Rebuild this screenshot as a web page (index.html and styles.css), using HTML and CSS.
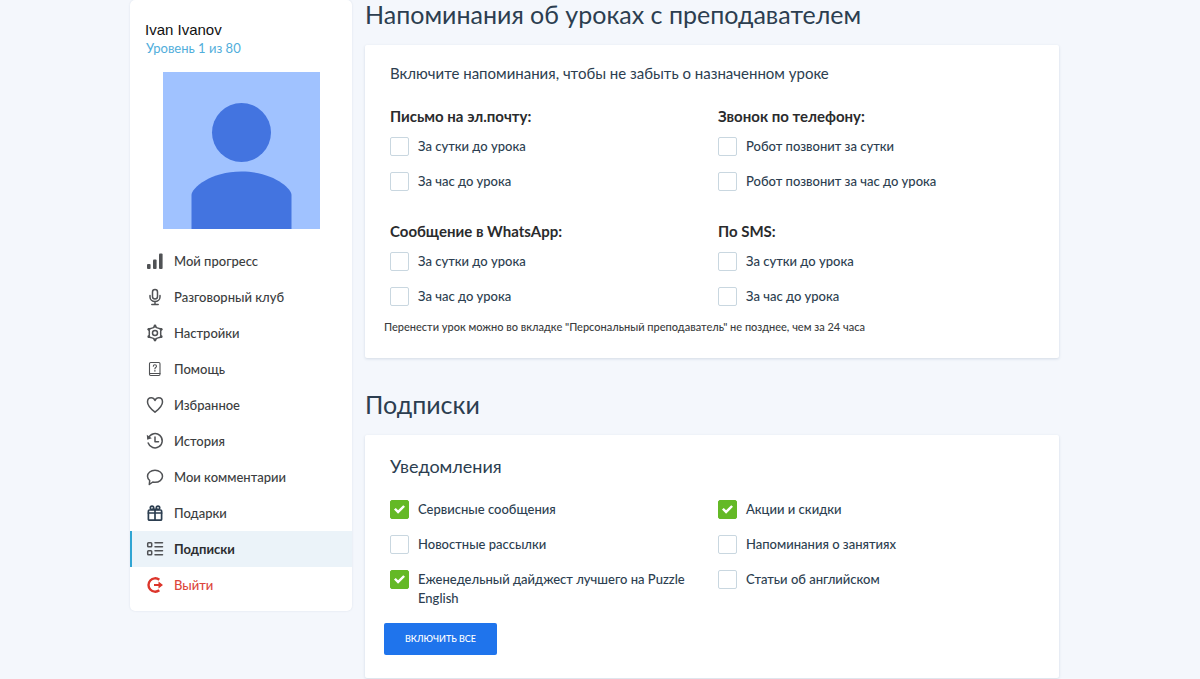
FILE: index.html
```html
<!DOCTYPE html>
<html lang="ru">
<head>
<meta charset="utf-8">
<meta name="viewport" content="width=device-width, initial-scale=1">
<title>Подписки</title>
<link rel="stylesheet" href="styles.css">
</head>
<body>
<div class="page">
  <aside class="sidebar">
    <div class="profile">
      <div class="profile-name">Ivan Ivanov</div>
      <a class="profile-level" href="#">Уровень 1 из 80</a>
      <svg class="avatar" viewBox="0 0 157 157" role="img" aria-label="Ivan Ivanov">
        <rect width="157" height="157" fill="#a0c2ff"/>
        <circle cx="78.500" cy="60.500" r="29.500" fill="#4374e0"/>
        <path d="M28.500 157v-34c0-7 19-23.500 50-23.500s50 16.500 50 23.500v34z" fill="#4374e0"/>
      </svg>
    </div>
    <nav class="menu">
      <a class="menu-item" href="#"><svg class="icon" viewBox="0 0 18 18"><g fill="#505255"><rect x="1" y="12" width="3.600" height="5" rx="1"/><rect x="7" y="7.500" width="3.600" height="9.500" rx="1"/><rect x="13" y="1.500" width="3.600" height="15.500" rx="1"/></g></svg>Мой прогресс</a>
      <a class="menu-item" href="#"><svg class="icon" viewBox="0 0 18 18"><g class="stroke"><rect x="6.500" y="1.500" width="5" height="9.500" rx="2.500"/><path d="M4 7.500v1.500a5 4.500 0 0 0 10 0V7.500M9 13.500v3M5.800 16.500h6.400"/></g></svg>Разговорный клуб</a>
      <a class="menu-item" href="#"><svg class="icon" viewBox="0 0 18 18"><g class="stroke"><path d="M9 2l1.600 1.600 3 1 1.700.3-.6 2.200v3.800l.6 2.200-1.700.3-3 1L9 16l-1.600-1.600-3-1-1.700-.3.600-2.200V7.100l-.6-2.200 1.700-.3 3-1z"/><circle cx="9" cy="9" r="2.500"/></g><g fill="#505255"><circle cx="9" cy="2" r="1.400"/><circle cx="15.200" cy="5.300" r="1.400"/><circle cx="15.200" cy="12.700" r="1.400"/><circle cx="9" cy="16" r="1.400"/><circle cx="2.800" cy="12.700" r="1.400"/><circle cx="2.800" cy="5.300" r="1.400"/></g></svg>Настройки</a>
      <a class="menu-item" href="#"><svg class="icon" viewBox="0 0 18 18"><g class="stroke thin"><rect x="3.500" y="2.500" width="10.500" height="13" rx="1.200"/><path d="M4 13.500h10M7.300 6.200c0-2 3.200-2 3.200 0 0 1.300-1.600 1.200-1.600 2.600M8.900 10.300v1"/></g></svg>Помощь</a>
      <a class="menu-item" href="#"><svg class="icon" viewBox="0 0 18 18"><path class="stroke" d="M9 16.200C5.500 13.500 1.500 10 1.500 6c0-2.500 1.600-4.200 3.800-4.200C7 1.800 8.300 2.900 9 4.500c.7-1.600 2-2.700 3.700-2.700 2.200 0 3.800 1.700 3.800 4.200 0 4-4 7.500-7.500 10.200z"/></svg>Избранное</a>
      <a class="menu-item" href="#"><svg class="icon" viewBox="0 0 18 18"><g class="stroke"><path d="M2.600 5.500A7.200 7.200 0 1 1 2.200 11M9 5v4.700h3.500"/></g><path d="M.8 2.800l.4 5 4.600-1.600z" fill="#505255"/></svg>История</a>
      <a class="menu-item" href="#"><svg class="icon" viewBox="0 0 18 18"><path class="stroke" d="M3.300 16.500l.4-4C2.300 11.300 1.500 10 1.500 8.300c0-3.500 3.300-6 7.500-6s7.500 2.500 7.500 6-3.300 6-7.500 6c-.8 0-1.500-.1-2.200-.3z"/></svg>Мои комментарии</a>
      <a class="menu-item" href="#"><svg class="icon" viewBox="0 0 18 18"><g class="stroke gift"><rect x="2.400" y="6" width="13.200" height="10.200" rx="1"/><path d="M2.400 9h13.200M9 6v10"/><circle cx="6" cy="3.800" r="1.700"/><circle cx="12" cy="3.800" r="1.700"/><path d="M7.500 4.500L9 6l1.500-1.500"/></g></svg>Подарки</a>
      <a class="menu-item active" href="#" aria-current="page"><svg class="icon" viewBox="0 0 18 18"><g class="stroke"><rect x="1.700" y="2.700" width="4" height="4" rx=".8"/><rect x="1.700" y="10.700" width="4" height="4" rx=".8"/><path d="M9 2.700h7.500M9 6.700h7.500M9 10.700h7.500M9 14.700h7.500"/></g></svg>Подписки</a>
      <a class="menu-item exit" href="#"><svg class="icon" viewBox="0 0 18 18"><path d="M13.300 3.700A6.700 6.700 0 1 0 13.300 14.300" fill="none" stroke="#dc352b" stroke-width="2.400"/><path d="M8 8.100h4.500V5.600L17 9l-4.500 3.400V9.900H8z" fill="#dc352b"/></svg>Выйти</a>
    </nav>
  </aside>

  <main class="content">
    <h1 class="section-title">Напоминания об уроках с преподавателем</h1>
    <section class="card">
      <p class="lead">Включите напоминания, чтобы не забыть о назначенном уроке</p>
      <div class="groups">
        <fieldset class="group">
          <legend>Письмо на эл.почту:</legend>
          <label class="option"><input type="checkbox">За сутки до урока</label>
          <label class="option"><input type="checkbox">За час до урока</label>
        </fieldset>
        <fieldset class="group">
          <legend>Звонок по телефону:</legend>
          <label class="option"><input type="checkbox">Робот позвонит за сутки</label>
          <label class="option"><input type="checkbox">Робот позвонит за час до урока</label>
        </fieldset>
        <fieldset class="group">
          <legend>Сообщение в WhatsApp:</legend>
          <label class="option"><input type="checkbox">За сутки до урока</label>
          <label class="option"><input type="checkbox">За час до урока</label>
        </fieldset>
        <fieldset class="group">
          <legend>По SMS:</legend>
          <label class="option"><input type="checkbox">За сутки до урока</label>
          <label class="option"><input type="checkbox">За час до урока</label>
        </fieldset>
      </div>
      <p class="note">Перенести урок можно во вкладке "Персональный преподаватель" не позднее, чем за 24 часа</p>
    </section>

    <h2 class="section-title">Подписки</h2>
    <section class="card">
      <h3 class="card-title">Уведомления</h3>
      <div class="subscriptions">
        <label class="option"><input type="checkbox" checked>Сервисные сообщения</label>
        <label class="option"><input type="checkbox" checked>Акции и скидки</label>
        <label class="option"><input type="checkbox">Новостные рассылки</label>
        <label class="option"><input type="checkbox">Напоминания о занятиях</label>
        <label class="option"><input type="checkbox" checked>Еженедельный дайджест лучшего на Puzzle English</label>
        <label class="option"><input type="checkbox">Статьи об английском</label>
      </div>
      <button class="enable-all" type="button">ВКЛЮЧИТЬ ВСЕ</button>
    </section>
  </main>
</div>
</body>
</html>
```
FILE: styles.css
```css
* { box-sizing: border-box; }

body {
  margin: 0;
  background: #f4f7fc;
  color: #2c3e50;
  font-family: Lato, "Noto Sans", sans-serif;
  font-size: 13px;
  font-weight: 500;
  line-height: 19px;
}

h1, h2, h3, p { margin: 0; font-weight: 400; }
a { text-decoration: none; }

.page {
  display: grid;
  grid-template-columns: 222px minmax(0, 1fr);
  gap: 13px;
  align-items: start;
  padding: 0 141px 0 130px;
}

.sidebar {
  padding: 20px 0 8px;
  background: #fff;
  border-radius: 5px;
  box-shadow: 0 0 2px rgba(60, 90, 130, .15);
}

.profile { padding: 0 15px; }

.profile-name {
  color: #111;
  font-family: "Liberation Sans", Arial, sans-serif;
  font-size: 15px;
  font-weight: 400;
  line-height: 20px;
}

.profile-level {
  display: block;
  padding-left: 1px;
  color: #51aedb;
  font-size: 13px;
  font-weight: 400;
  line-height: 17px;
}

.avatar {
  display: block;
  width: 157px;
  height: 157px;
  margin: 15px 0 14px 18px;
}

.menu-item {
  display: flex;
  align-items: center;
  gap: 10px;
  height: 36px;
  padding: 0 16px;
  color: #3b3d40;
}

.menu-item.active {
  padding-left: 14px;
  border-left: 2px solid #30a5d3;
  background: #ebf3f9;
  color: #2b2d30;
  font-weight: 700;
}

.menu-item.exit { color: #dc453b; }

.icon { flex: none; width: 18px; height: 18px; }

.stroke {
  fill: none;
  stroke: #505255;
  stroke-width: 1.5;
  stroke-linecap: round;
  stroke-linejoin: round;
}
.thin { stroke-width: 1.1; }
.gift { stroke: #2c3e50; stroke-width: 1.7; }

.section-title {
  color: #2c3e50;
  font-size: 25px;
  line-height: 28px;
}

.card {
  margin: 17px 0 32px;
  padding: 18px 13px 23px 25px;
  background: #fff;
  border-radius: 2px;
  box-shadow: 0 1px 3px rgba(60, 90, 130, .18);
}

.card:last-child { margin-bottom: 1px; }

.lead {
  font-size: 15px;
  line-height: 20px;
}

.groups {
  display: grid;
  grid-template-columns: 1fr 1fr;
  row-gap: 30px;
  margin-top: 23px;
}

.group {
  min-width: 0;
  margin: 0;
  padding: 0;
  border: 0;
}

.group legend {
  margin-bottom: 11px;
  padding: 0;
  color: #2a2b2d;
  font-size: 15px;
  font-weight: 700;
  line-height: 20px;
}

.option {
  display: flex;
  align-items: flex-start;
  gap: 9px;
  padding-right: 20px;
}

.option + .option { margin-top: 16px; }

.option input {
  flex: none;
  display: grid;
  place-items: center;
  width: 19px;
  height: 19px;
  margin: 0;
  appearance: none;
  border: 1px solid #c9d7e0;
  border-radius: 2px;
  background: #fff;
}

.option input:checked { border-color: #64b926; background: #64b926; }

.option input:checked::before {
  content: "";
  width: 11px;
  height: 9px;
  background: #fff;
  clip-path: polygon(0 50%, 16% 32%, 37% 58%, 84% 2%, 100% 20%, 37% 98%);
}

.note {
  margin: 13px 0 0 -6px;
  color: #3b3d40;
  font-size: 11px;
  font-weight: 500;
  line-height: 16px;
}

.card-title {
  font-size: 18px;
  line-height: 26px;
}

.subscriptions {
  display: grid;
  grid-template-columns: 1fr 1fr;
  row-gap: 16px;
  margin-top: 21px;
}

.subscriptions .option + .option { margin-top: 0; }

.enable-all {
  display: block;
  height: 32px;
  margin: 15px 0 0 -6px;
  padding: 0 21px;
  border: 0;
  border-radius: 2px;
  background: #1f74ec;
  color: #fff;
  font: 500 9px/16px Lato, "Noto Sans", sans-serif;
}
```
